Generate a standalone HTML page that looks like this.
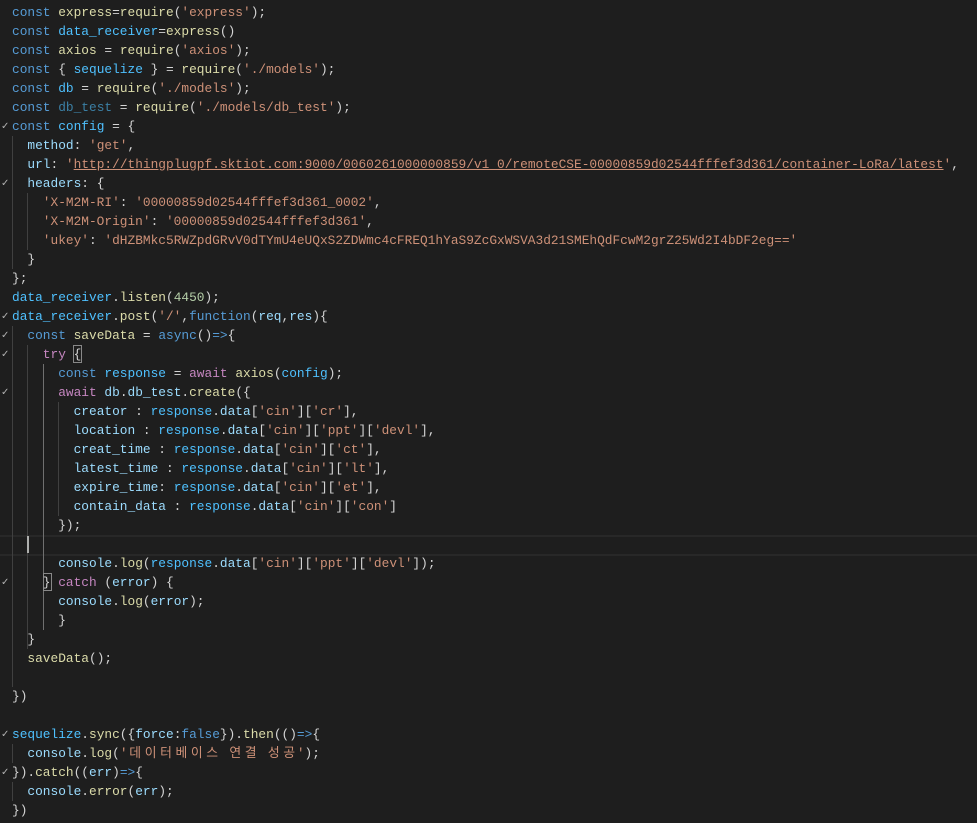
<!DOCTYPE html>
<html><head><meta charset="utf-8"><style>
body{margin:0;background:#1e1e1e;width:977px;height:823px;overflow:hidden;position:relative}
.l{position:absolute;left:12px;height:19px;line-height:19px;font-family:"Liberation Mono","Noto Sans CJK KR",monospace;font-size:12.83px;color:#d4d4d4;white-space:pre;margin:0}
.k{color:#569cd6}.v{color:#9cdcfe}.f{color:#dcdcaa}.s{color:#ce9178}.c{color:#c586c0}.n{color:#b5cea8}.b{color:#4fc1ff}.d{color:#4fc1ff;opacity:.6}
.u{text-decoration:underline;text-decoration-color:#ce9178}
.g{position:absolute;width:1px;background:#404040}
.ch{position:absolute;left:1px;font-family:"DejaVu Sans",sans-serif;font-size:10px;color:#b0b0b0;line-height:19px}
.ko{display:inline-block;width:15.4px;text-align:center}
.bx{position:absolute;border:1px solid #888;width:7px;height:16px}
</style></head><body>
<div style="position:absolute;left:0;top:535px;width:977px;height:17px;border-top:2px solid #282828;border-bottom:2px solid #282828"></div>
<div class="g" style="left:12px;top:136px;height:133px"></div>
<div class="g" style="left:27px;top:193px;height:57px"></div>
<div class="g" style="left:12px;top:326px;height:361px"></div>
<div class="g" style="left:27px;top:345px;height:304px"></div>
<div class="g" style="left:43px;top:364px;height:266px;background:#707070"></div>
<div class="g" style="left:58px;top:402px;height:114px"></div>
<div class="g" style="left:12px;top:744px;height:19px"></div>
<div class="g" style="left:12px;top:782px;height:19px"></div>
<div style="position:absolute;left:27px;top:536px;width:2px;height:17px;background:#aeafad"></div>
<div class="bx" style="left:73px;top:345px"></div>
<div class="bx" style="left:43px;top:573px"></div>
<div class="ch" style="top:117px">✓</div>
<div class="ch" style="top:174px">✓</div>
<div class="ch" style="top:307px">✓</div>
<div class="ch" style="top:326px">✓</div>
<div class="ch" style="top:345px">✓</div>
<div class="ch" style="top:383px">✓</div>
<div class="ch" style="top:573px">✓</div>
<div class="ch" style="top:725px">✓</div>
<div class="ch" style="top:763px">✓</div>
<pre class="l" style="top:3px"><span class="k">const</span> <span class="f">express</span>=<span class="f">require</span>(<span class="s">'express'</span>);</pre>
<pre class="l" style="top:22px"><span class="k">const</span> <span class="b">data_receiver</span>=<span class="f">express</span>()</pre>
<pre class="l" style="top:41px"><span class="k">const</span> <span class="f">axios</span> = <span class="f">require</span>(<span class="s">'axios'</span>);</pre>
<pre class="l" style="top:60px"><span class="k">const</span> { <span class="b">sequelize</span> } = <span class="f">require</span>(<span class="s">'./models'</span>);</pre>
<pre class="l" style="top:79px"><span class="k">const</span> <span class="b">db</span> = <span class="f">require</span>(<span class="s">'./models'</span>);</pre>
<pre class="l" style="top:98px"><span class="k">const</span> <span class="d">db_test</span> = <span class="f">require</span>(<span class="s">'./models/db_test'</span>);</pre>
<pre class="l" style="top:117px"><span class="k">const</span> <span class="b">config</span> = {</pre>
<pre class="l" style="top:136px">  <span class="v">method</span>: <span class="s">'get'</span>,</pre>
<pre class="l" style="top:155px">  <span class="v">url</span>: <span class="s">'<span class="u">http://thingplugpf.sktiot.com:9000/0060261000000859/v1_0/remoteCSE-00000859d02544fffef3d361/container-LoRa/latest</span>'</span>,</pre>
<pre class="l" style="top:174px">  <span class="v">headers</span>: {</pre>
<pre class="l" style="top:193px">    <span class="s">'X-M2M-RI'</span>: <span class="s">'00000859d02544fffef3d361_0002'</span>,</pre>
<pre class="l" style="top:212px">    <span class="s">'X-M2M-Origin'</span>: <span class="s">'00000859d02544fffef3d361'</span>,</pre>
<pre class="l" style="top:231px">    <span class="s">'ukey'</span>: <span class="s">'dHZBMkc5RWZpdGRvV0dTYmU4eUQxS2ZDWmc4cFREQ1hYaS9ZcGxWSVA3d21SMEhQdFcwM2grZ25Wd2I4bDF2eg=='</span></pre>
<pre class="l" style="top:250px">  }</pre>
<pre class="l" style="top:269px">};</pre>
<pre class="l" style="top:288px"><span class="b">data_receiver</span>.<span class="f">listen</span>(<span class="n">4450</span>);</pre>
<pre class="l" style="top:307px"><span class="b">data_receiver</span>.<span class="f">post</span>(<span class="s">'/'</span>,<span class="k">function</span>(<span class="v">req</span>,<span class="v">res</span>){</pre>
<pre class="l" style="top:326px">  <span class="k">const</span> <span class="f">saveData</span> = <span class="k">async</span>()<span class="k">=&gt;</span>{</pre>
<pre class="l" style="top:345px">    <span class="c">try</span> {</pre>
<pre class="l" style="top:364px">      <span class="k">const</span> <span class="b">response</span> = <span class="c">await</span> <span class="f">axios</span>(<span class="b">config</span>);</pre>
<pre class="l" style="top:383px">      <span class="c">await</span> <span class="v">db</span>.<span class="v">db_test</span>.<span class="f">create</span>({</pre>
<pre class="l" style="top:402px">        <span class="v">creator</span> : <span class="b">response</span>.<span class="v">data</span>[<span class="s">'cin'</span>][<span class="s">'cr'</span>],</pre>
<pre class="l" style="top:421px">        <span class="v">location</span> : <span class="b">response</span>.<span class="v">data</span>[<span class="s">'cin'</span>][<span class="s">'ppt'</span>][<span class="s">'devl'</span>],</pre>
<pre class="l" style="top:440px">        <span class="v">creat_time</span> : <span class="b">response</span>.<span class="v">data</span>[<span class="s">'cin'</span>][<span class="s">'ct'</span>],</pre>
<pre class="l" style="top:459px">        <span class="v">latest_time</span> : <span class="b">response</span>.<span class="v">data</span>[<span class="s">'cin'</span>][<span class="s">'lt'</span>],</pre>
<pre class="l" style="top:478px">        <span class="v">expire_time</span>: <span class="b">response</span>.<span class="v">data</span>[<span class="s">'cin'</span>][<span class="s">'et'</span>],</pre>
<pre class="l" style="top:497px">        <span class="v">contain_data</span> : <span class="b">response</span>.<span class="v">data</span>[<span class="s">'cin'</span>][<span class="s">'con'</span>]</pre>
<pre class="l" style="top:516px">      });</pre>
<pre class="l" style="top:554px">      <span class="v">console</span>.<span class="f">log</span>(<span class="b">response</span>.<span class="v">data</span>[<span class="s">'cin'</span>][<span class="s">'ppt'</span>][<span class="s">'devl'</span>]);</pre>
<pre class="l" style="top:573px">    } <span class="c">catch</span> (<span class="v">error</span>) {</pre>
<pre class="l" style="top:592px">      <span class="v">console</span>.<span class="f">log</span>(<span class="v">error</span>);</pre>
<pre class="l" style="top:611px">      }</pre>
<pre class="l" style="top:630px">  }</pre>
<pre class="l" style="top:649px">  <span class="f">saveData</span>();</pre>
<pre class="l" style="top:687px">})</pre>
<pre class="l" style="top:725px"><span class="b">sequelize</span>.<span class="f">sync</span>({<span class="v">force</span>:<span class="k">false</span>}).<span class="f">then</span>(()<span class="k">=&gt;</span>{</pre>
<pre class="l" style="top:744px">  <span class="v">console</span>.<span class="f">log</span>(<span class="s">'<span class="ko">데</span><span class="ko">이</span><span class="ko">터</span><span class="ko">베</span><span class="ko">이</span><span class="ko">스</span> <span class="ko">연</span><span class="ko">결</span> <span class="ko">성</span><span class="ko">공</span>'</span>);</pre>
<pre class="l" style="top:763px">}).<span class="f">catch</span>((<span class="v">err</span>)<span class="k">=&gt;</span>{</pre>
<pre class="l" style="top:782px">  <span class="v">console</span>.<span class="f">error</span>(<span class="v">err</span>);</pre>
<pre class="l" style="top:801px">})</pre>
</body></html>
